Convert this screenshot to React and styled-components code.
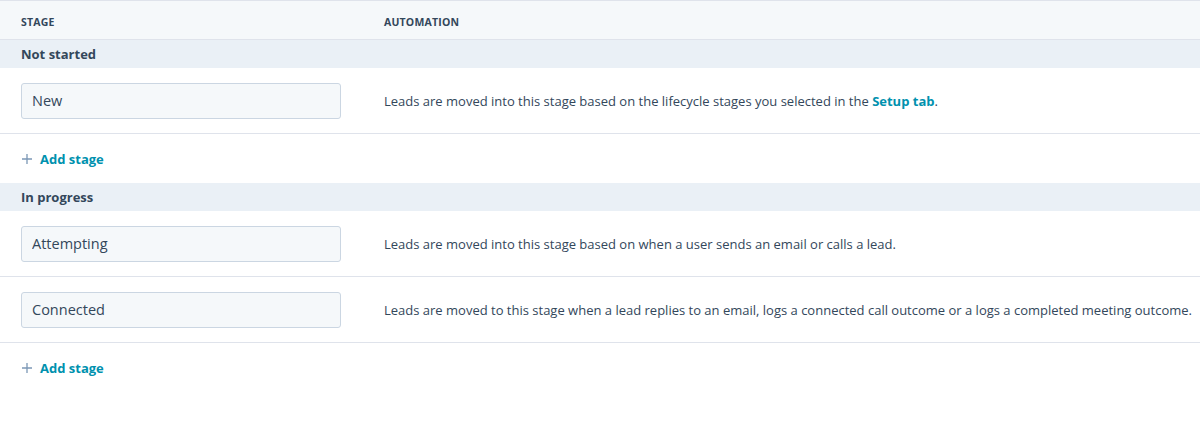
import React from 'react'
import styled, { createGlobalStyle } from 'styled-components'

const font = '"Open Sans", "Noto Sans", sans-serif'

const GlobalStyle = createGlobalStyle`
  html, body {
    margin: 0;
    padding: 0;
    background: #ffffff;
  }
  body {
    font-family: ${font};
    color: #33475b;
  }
`

const groups = [
  {
    title: 'Not started',
    stages: [
      {
        name: 'New',
        text: 'Leads are moved into this stage based on the lifecycle stages you selected in the ',
        link: 'Setup tab',
      },
    ],
  },
  {
    title: 'In progress',
    stages: [
      {
        name: 'Attempting',
        text: 'Leads are moved into this stage based on when a user sends an email or calls a lead.',
      },
      {
        name: 'Connected',
        text: 'Leads are moved to this stage when a lead replies to an email, logs a connected call outcome or a logs a completed meeting outcome.',
      },
    ],
  },
]

const App = () => {
  return (
    <>
      <GlobalStyle />
      <Table>
        <HeadRow>
          <HeadCell>Stage</HeadCell>
          <HeadCell>Automation</HeadCell>
        </HeadRow>
        {groups.map((g) => (
          <React.Fragment key={g.title}>
            <GroupRow>{g.title}</GroupRow>
            {g.stages.map((s) => (
              <StageRow key={s.name}>
                <StageCell>
                  <StageInput defaultValue={s.name} />
                </StageCell>
                <AutomationCell>
                  {s.text}
                  {s.link && (
                    <>
                      <LinkText>{s.link}</LinkText>.
                    </>
                  )}
                </AutomationCell>
              </StageRow>
            ))}
            <AddRow>
              <AddButton>
                <svg width="10" height="10" viewBox="0 0 10 10">
                  <path d="M5 0v10M0 5h10" stroke="#7c98b6" strokeWidth="1.3" fill="none" />
                </svg>
                Add stage
              </AddButton>
            </AddRow>
          </React.Fragment>
        ))}
      </Table>
    </>
  )
}
export default App

const Table = styled.div`
  width: 1200px;
  border-top: 1px solid #dfe3eb;
`

const HeadRow = styled.div`
  box-sizing: border-box;
  display: grid;
  grid-template-columns: 363px 1fr;
  height: 39px;
  padding-top: 4px;
  align-items: center;
  background: #f5f8fa;
  border-bottom: 1px solid #dfe3eb;
`

const HeadCell = styled.div`
  padding-left: 21px;
  font-size: 10.5px;
  font-weight: 700;
  letter-spacing: 0.2px;
  text-transform: uppercase;
  color: #33475b;
`

const GroupRow = styled.div`
  height: 28px;
  display: flex;
  align-items: center;
  padding-left: 21px;
  background: #eaf0f6;
  font-size: 13px;
  font-weight: 700;
  color: #33475b;
`

const StageRow = styled.div`
  display: grid;
  grid-template-columns: 363px 1fr;
  align-items: center;
  height: 65px;
  border-bottom: 1px solid #dfe3eb;
`

const StageCell = styled.div`
  padding-left: 21px;
`

const StageInput = styled.input`
  box-sizing: border-box;
  width: 320px;
  height: 36px;
  padding: 0 10px;
  background: #f5f8fa;
  border: 1px solid #cbd6e2;
  border-radius: 3px;
  font-family: ${font};
  font-size: 14.5px;
  color: #33475b;
  outline: none;
`

const AutomationCell = styled.div`
  padding-left: 21px;
  font-size: 13px;
  color: #33475b;
  white-space: nowrap;
`

const LinkText = styled.a`
  color: #0091ae;
  font-weight: 700;
  cursor: pointer;
`

const AddRow = styled.div`
  height: 49px;
  display: flex;
  align-items: center;
  padding-left: 22px;
`

const AddButton = styled.button`
  display: flex;
  align-items: center;
  gap: 8px;
  padding: 0;
  border: none;
  background: none;
  font-family: ${font};
  font-size: 13px;
  font-weight: 700;
  color: #0091ae;
  cursor: pointer;
`
